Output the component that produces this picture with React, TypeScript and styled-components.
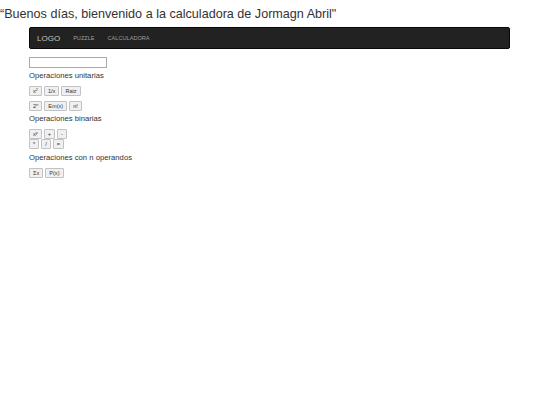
import styled, { createGlobalStyle } from 'styled-components';

const GlobalStyle = createGlobalStyle`
  body {
    margin: 0;
    background: #ffffff;
    font-family: 'Liberation Sans', Arial, sans-serif;
    color: #333333;
  }
`;

const Greeting = styled.h1`
  margin: 0;
  padding-top: 7px;
  font-size: 12.6px;
  line-height: 14px;
  font-weight: 400;
  color: #333333;
`;

const Page = styled.div`
  padding: 0 30px 0 29px;
`;

const NavBar = styled.nav`
  margin-top: 6px;
  height: 22px;
  box-sizing: border-box;
  display: flex;
  align-items: center;
  gap: 13px;
  padding: 0 7px;
  background: #222222;
  border: 1px solid #080808;
  border-radius: 2px;
`;

const Brand = styled.span`
  font-size: 8px;
  font-weight: 400;
  color: #c4c4c4;
`;

const NavLink = styled.span`
  font-size: 5.6px;
  color: #9d9d9d;
  text-transform: uppercase;
`;

const Display = styled.input`
  display: block;
  margin-top: 8px;
  width: 78px;
  height: 11px;
  box-sizing: border-box;
  border: 1px solid #a9a9a9;
  padding: 0 2px;
  font-size: 6px;
`;

const SectionTitle = styled.div<{ gap: number }>`
  margin-top: ${({ gap }) => gap}px;
  font-size: 7.7px;
  line-height: 10px;
  color: #333333;
`;

const ButtonRow = styled.div<{ gap: number }>`
  display: flex;
  gap: 2px;
  margin-top: ${({ gap }) => gap}px;
`;

const OpButton = styled.button`
  height: 10px;
  box-sizing: border-box;
  padding: 0 3px;
  font-family: 'Liberation Sans', Arial, sans-serif;
  font-size: 5.6px;
  line-height: 8px;
  color: #333333;
  background: #f0f0f0;
  border: 1px solid #c2c2c2;
  border-radius: 1px;
`;

const Sup = styled.sup`
  font-size: 3.8px;
  vertical-align: 2px;
  line-height: 0;
`;

const App = () => (
  <>
    <GlobalStyle />
    <Greeting>“Buenos días, bienvenido a la calculadora de Jormagn Abril"</Greeting>
    <Page>
      <NavBar>
        <Brand>LOGO</Brand>
        <NavLink>Puzzle</NavLink>
        <NavLink>Calculadora</NavLink>
      </NavBar>
      <Display type="text" />

      <SectionTitle gap={3}>Operaciones unitarias</SectionTitle>
      <ButtonRow gap={5}>
        <OpButton>x<Sup>2</Sup></OpButton>
        <OpButton>1/x</OpButton>
        <OpButton>Raiz</OpButton>
      </ButtonRow>
      <ButtonRow gap={5}>
        <OpButton>2<Sup>n</Sup></OpButton>
        <OpButton>Em(x)</OpButton>
        <OpButton>n!</OpButton>
      </ButtonRow>

      <SectionTitle gap={3}>Operaciones binarias</SectionTitle>
      <ButtonRow gap={5}>
        <OpButton>x<Sup>y</Sup></OpButton>
        <OpButton>+</OpButton>
        <OpButton>-</OpButton>
      </ButtonRow>
      <ButtonRow gap={0}>
        <OpButton>*</OpButton>
        <OpButton>/</OpButton>
        <OpButton>=</OpButton>
      </ButtonRow>

      <SectionTitle gap={4}>Operaciones con n operandos</SectionTitle>
      <ButtonRow gap={5}>
        <OpButton>Σx</OpButton>
        <OpButton>P(x)</OpButton>
      </ButtonRow>
    </Page>
  </>
);

export default App;
